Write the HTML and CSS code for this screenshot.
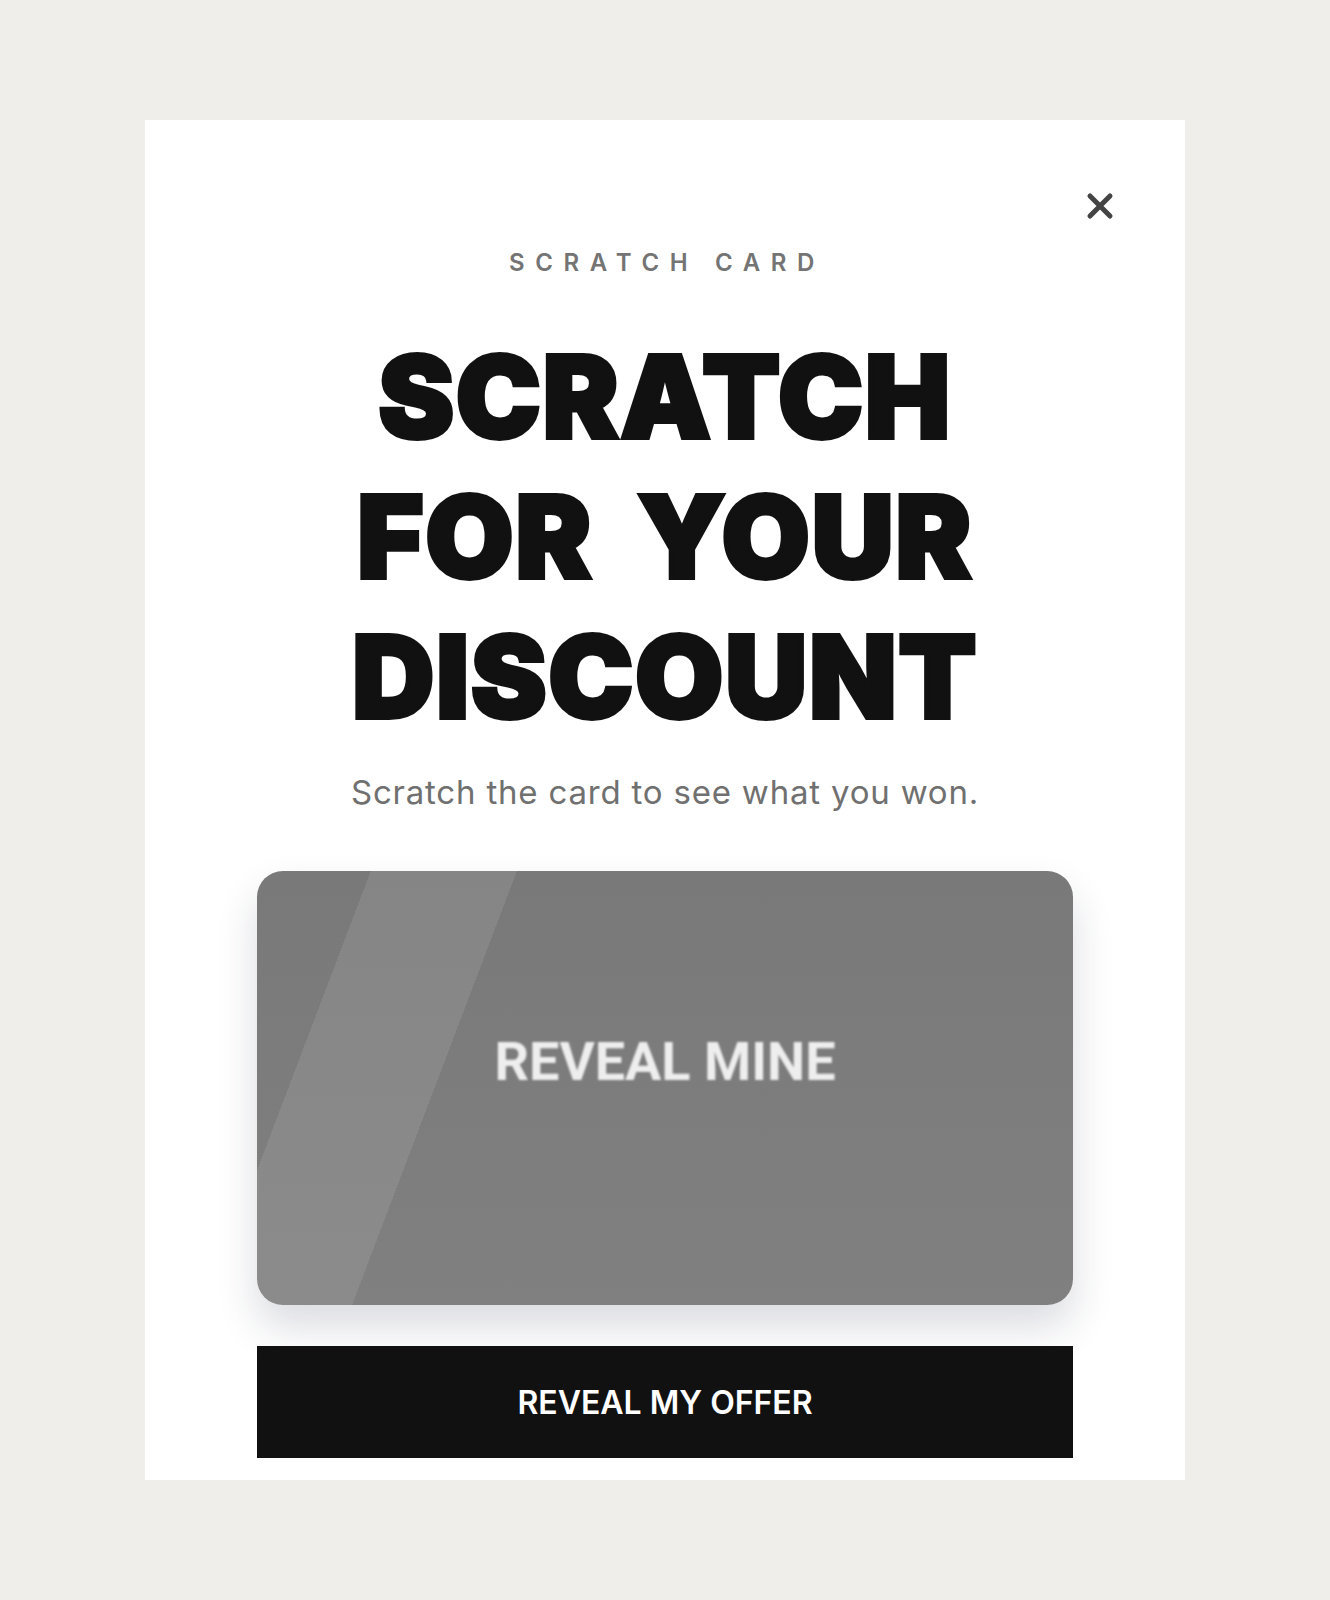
FILE: index.html
```html
<!DOCTYPE html>
<html lang="en">
<head>
<meta charset="utf-8">
<title>Scratch Card</title>
<link rel="stylesheet" href="styles.css">
</head>
<body>
<div class="modal">
  <button class="close" aria-label="Close">
    <svg viewBox="0 0 30 30" width="30" height="30"><path d="M5 5L25 25M25 5L5 25" stroke="#444" stroke-width="5" stroke-linecap="round" fill="none"/></svg>
  </button>
  <div class="eyebrow">SCRATCH CARD</div>
  <h1 class="title">SCRATCH<br>FOR YOUR<br>DISCOUNT</h1>
  <p class="subtitle">Scratch the card to see what you won.</p>
  <div class="card">
    <span class="card-label">REVEAL MINE</span>
  </div>
  <button class="cta">REVEAL MY OFFER</button>
</div>
</body>
</html>
```
FILE: styles.css
```css
html, body {
  margin: 0;
  padding: 0;
  background: #efeeea;
}
body {
  font-family: Inter, "Noto Sans", sans-serif;
  padding-top: 120px;
  min-height: 1600px;
  box-sizing: border-box;
}
.modal {
  position: relative;
  width: 1040px;
  margin: 0 auto;
  background: #ffffff;
  box-sizing: border-box;
  padding: 131px 112px 22px;
  display: flex;
  flex-direction: column;
  align-items: stretch;
  text-align: center;
}
.close {
  position: absolute;
  top: 71px;
  right: 70px;
  width: 30px;
  height: 30px;
  padding: 0;
  border: 0;
  background: none;
  display: block;
}
.close svg { display: block; }
.eyebrow {
  font-size: 24px;
  line-height: 24px;
  font-weight: 600;
  letter-spacing: 10.6px;
  margin-right: -4px;
  color: #747474;
}
.title {
  margin: 52px 0 0;
  font-family: Inter, sans-serif;
  font-weight: 900;
  font-size: 114px;
  line-height: 140px;
  color: #111111;
  letter-spacing: 1.6px;
  word-spacing: 20px;
  -webkit-text-stroke: 4px #111111;
}
.subtitle {
  margin: 25px 0 0;
  font-size: 33px;
  line-height: 40px;
  color: #707070;
  letter-spacing: 0.8px;
}
.card {
  margin-top: 59px;
  height: 434px;
  border-radius: 26px;
  background:
    linear-gradient(110.8deg, rgba(255,255,255,0) 11.6%, rgba(255,255,255,0.09) 11.6%, rgba(255,255,255,0.09) 26.5%, rgba(255,255,255,0) 26.5%),
    linear-gradient(180deg, #797979 0%, #808080 100%);
  box-shadow: 0 22px 40px rgba(30, 40, 70, 0.16);
  display: flex;
  justify-content: center;
  padding-top: 159px;
  box-sizing: border-box;
}
.card-label {
  font-family: Roboto, sans-serif;
  font-weight: 700;
  font-size: 54px;
  line-height: 64px;
  height: 64px;
  color: #eeeeee;
  filter: blur(1.2px);
}
.cta {
  margin-top: 41px;
  height: 112px;
  border: 0;
  background: #111111;
  color: #ffffff;
  font-family: Inter, sans-serif;
  font-weight: 600;
  font-size: 32px;
  padding: 0;
}
```
